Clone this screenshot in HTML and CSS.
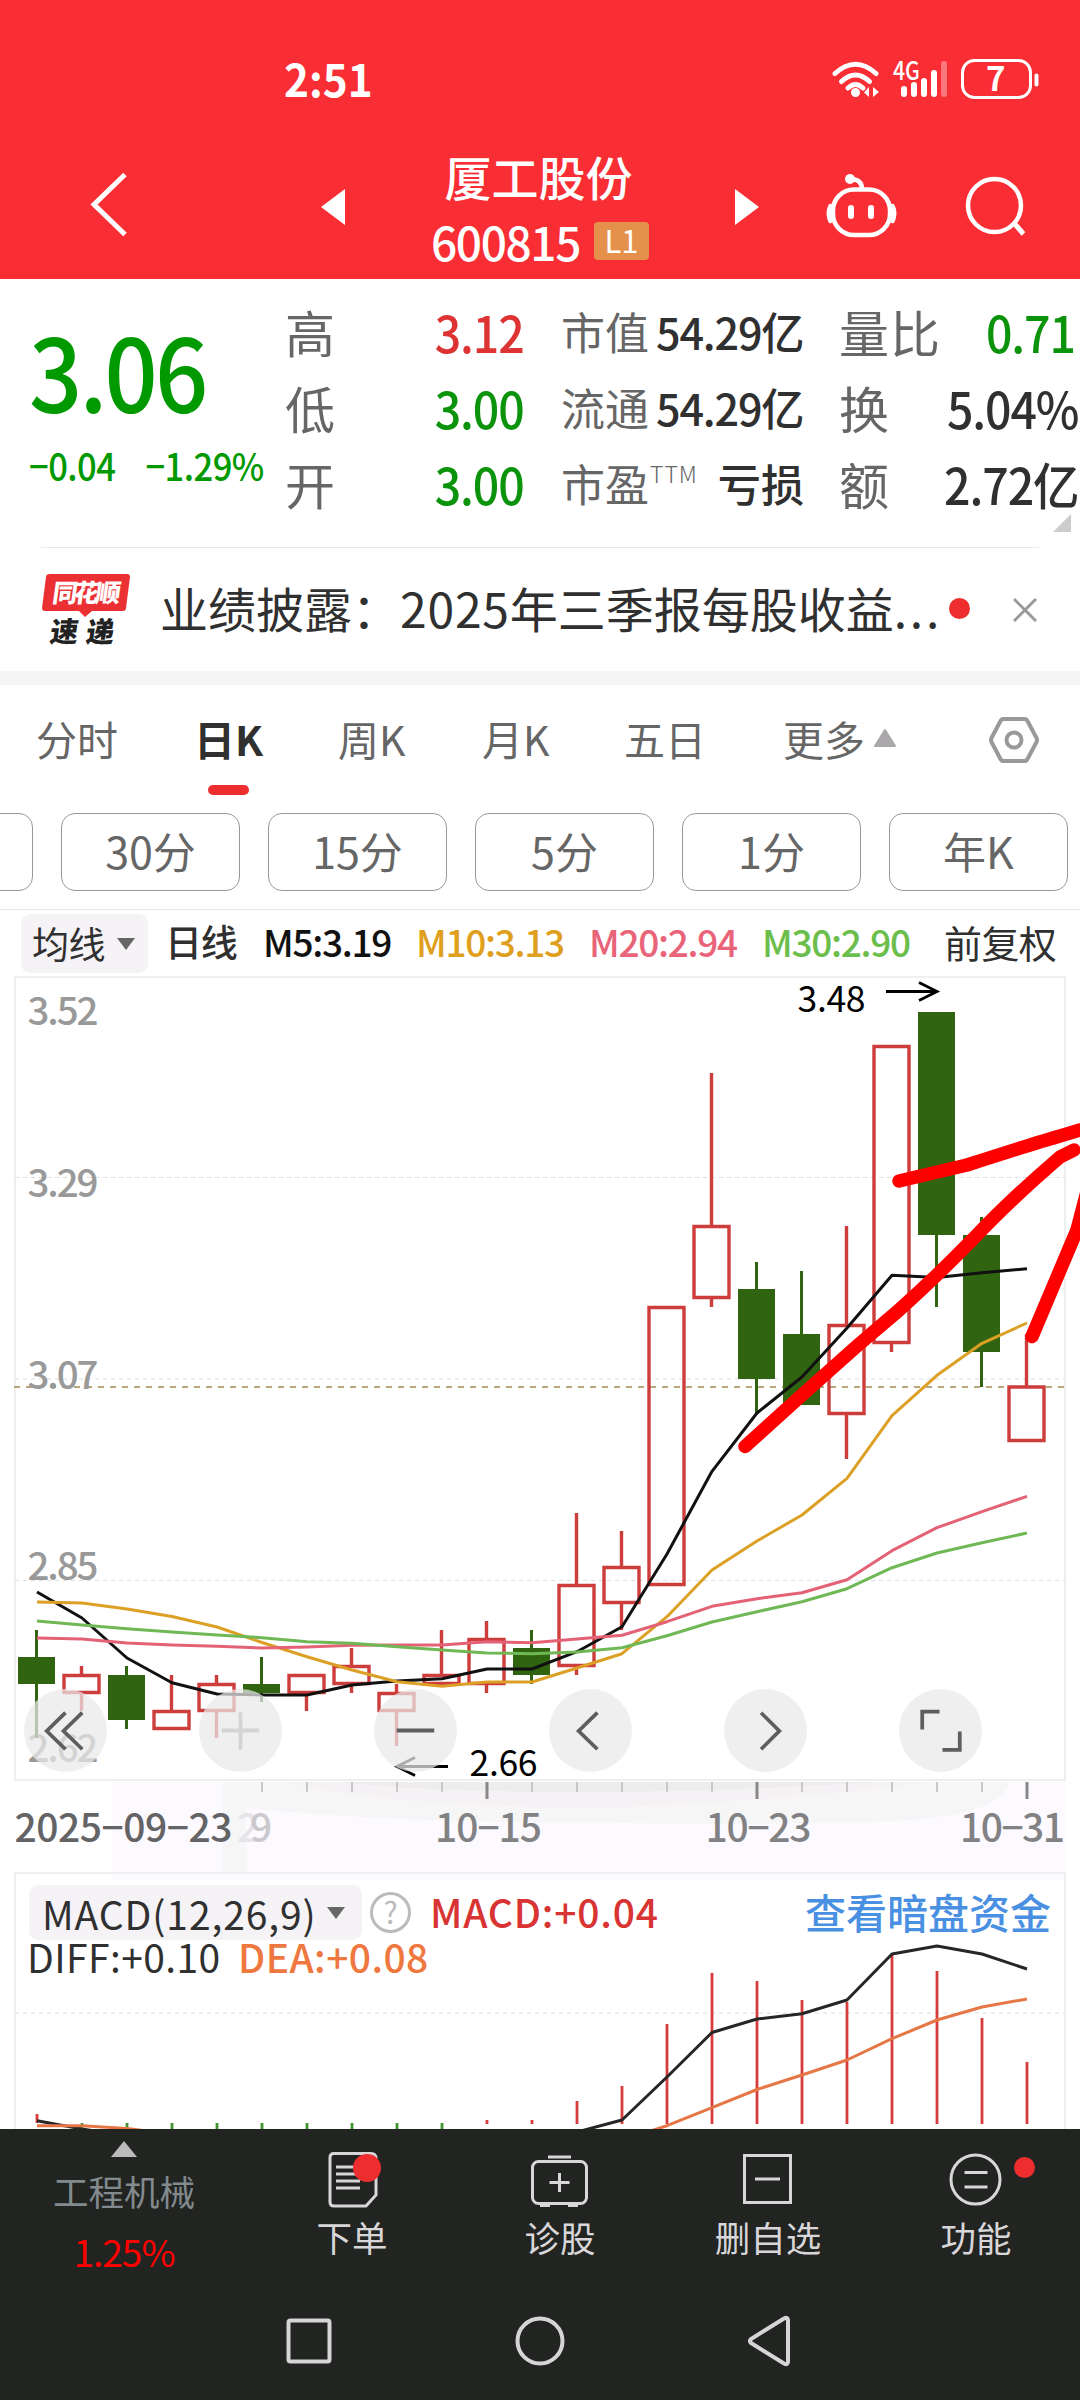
FILE: index.html
```html
<!DOCTYPE html>
<html lang="zh-CN">
<head>
<meta charset="utf-8">
<title>厦工股份 600815</title>
<link rel="stylesheet" href="styles.css">
</head>
<body>
<div class="app">
  <header class="top">
    <div class="status">
      <span class="clock">2:51</span>
      <svg class="status-icons" width="216" height="48" viewBox="828 56 216 48">
        <g fill="none" stroke="#fff" stroke-width="5" stroke-linecap="round">
          <path d="M835 73.500Q855.500 55 876 73.500"/>
          <path d="M841.500 81.500Q855.500 68.500 869.500 81.500"/>
          <path d="M848 88Q855.500 81 863 88"/>
        </g>
        <circle cx="855.500" cy="92.500" r="4.500" fill="#fff"/>
        <path d="M869 87v10l-5-4.500zM873 87v10l6-5z" fill="#fff"/>
        <text x="893" y="79.500" font-size="25" font-weight="500" textLength="27" lengthAdjust="spacingAndGlyphs" fill="#fff">4G</text>
        <g stroke="#fff" stroke-width="6" stroke-linecap="round">
          <path d="M904 89v5M914 85v9M924 81v13M934 73v21"/>
          <path d="M944 64v30" opacity=".35"/>
        </g>
        <rect x="962.500" y="60.500" width="68" height="37" rx="12" fill="none" stroke="#fff" stroke-width="3"/>
        <path d="M1036.500 75.500v9" stroke="#fff" stroke-width="4" stroke-linecap="round"/>
        <text x="986" y="91" font-size="33" font-weight="700" fill="#fff">7</text>
      </svg>
    </div>
    <div class="title-bar">
      <svg class="back" width="44" height="70" viewBox="88 170 44 70"><path d="M125 174.500 94 204.500l31 30" fill="none" stroke="#fff" stroke-width="5"/></svg>
      <svg class="prev" width="24" height="36" viewBox="0 0 24 36"><path d="M24 0v36L0 18z" fill="#fff"/></svg>
      <div class="stock">
        <div class="stock-name">厦工股份</div>
        <div class="stock-code"><span>600815</span><b>L1</b></div>
      </div>
      <svg class="next" width="24" height="36" viewBox="0 0 24 36"><path d="M0 0v36l24-18z" fill="#fff"/></svg>
      <svg class="robot" width="74" height="70" viewBox="824 170 74 70">
        <g fill="none" stroke="#fff" stroke-width="4.500" stroke-linecap="round">
          <rect x="833" y="189.500" width="57" height="45.500" rx="21"/>
          <path d="M830.500 206q-3.500 7 0 15M892.500 206q3.500 7 0 15M862 189q0-9-10-10"/>
          <path d="M851 208v8M871 208v8" stroke-width="6"/>
        </g>
        <circle cx="850" cy="179" r="5" fill="#fff"/>
      </svg>
      <svg class="search" width="64" height="64" viewBox="962 174 64 64"><g fill="none" stroke="#fff" stroke-width="4.500"><circle cx="994.500" cy="205.500" r="26.500"/><path d="M1014 223l9.500 11" stroke-width="5"/></g></svg>
    </div>
  </header>

  <section class="quote">
    <div class="price">
      <div class="last">3.06</div>
      <div class="change"><span>−0.04</span><span>−1.29%</span></div>
    </div>
    <dl class="col col-a">
      <dt>高</dt><dd class="up">3.12</dd>
      <dt>低</dt><dd class="down">3.00</dd>
      <dt>开</dt><dd class="down">3.00</dd>
    </dl>
    <dl class="col col-b">
      <dt>市值</dt><dd>54.29<i>亿</i></dd>
      <dt>流通</dt><dd>54.29<i>亿</i></dd>
      <dt>市盈<sup>TTM</sup></dt><dd><i>亏损</i></dd>
    </dl>
    <dl class="col col-c">
      <dt>量比</dt><dd class="down ratio">0.71</dd>
      <dt>换</dt><dd>5.04%</dd>
      <dt>额</dt><dd>2.72<i>亿</i></dd>
    </dl>
    <svg class="corner" width="18" height="18" viewBox="0 0 18 18"><path d="M18 0v18H0z" fill="#ccc"/></svg>
  </section>

  <section class="news">
    <svg class="logo" width="90" height="74" viewBox="41 572 90 74">
      <path d="M50 573h77q3 0 3 3l-4 31q0 3-3 3H92l-7 6-6-6H45q-3 0-3-3l4-31q0-3 4-3z" fill="#eb3033"/>
      <g font-weight="900" transform="skewX(-8)">
        <text x="136" y="601.500" font-size="25" textLength="68" fill="#fff">同花顺</text>
        <text x="139" y="641" font-size="28" textLength="64" fill="#222">速递</text>
      </g>
    </svg>
    <div class="headline">业绩披露：<span>2025</span>年三季报每股收益<em>...</em></div>
    <i class="dot"></i>
    <svg class="close" width="24" height="24" viewBox="0 0 24 24"><path d="M1 1l22 22M23 1 1 23" stroke="#999" stroke-width="3"/></svg>
  </section>

  <nav class="tabs">
    <span>分时</span><span class="active">日K</span><span>周K</span><span>月K</span><span>五日</span>
    <span class="more">更多<svg width="24" height="20" viewBox="0 0 24 20"><path d="M12 2 22 18H2z" fill="#aaa8aa" stroke="#aaa8aa" stroke-width="2" stroke-linejoin="round"/></svg></span>
    <svg class="gear" width="50" height="48" viewBox="0 0 50 48"><g fill="none" stroke="#999" stroke-width="4"><path d="M14.500 3h21q2 0 3 2l9 17q1 2 0 4l-9 17q-1 2-3 2h-21q-2 0-3-2l-9-17q-1-2 0-4l9-17q1-2 3-2z"/><circle cx="25" cy="24" r="7.500"/></g></svg>
  </nav>
  <div class="periods"><span></span><span>30分</span><span>15分</span><span>5分</span><span>1分</span><span>年K</span></div>

  <div class="ma">
    <span class="chip">均线<svg width="18" height="12" viewBox="0 0 18 12"><path d="M0 0h18L9 12z" fill="#666"/></svg></span>
    <span class="day">日线</span>
    <span class="m5">M5:3.19</span><span class="m10">M10:3.13</span><span class="m20">M20:2.94</span><span class="m30">M30:2.90</span>
    <span class="adjust">前复权</span>
  </div>

  <section class="kline">
    <svg width="1080" height="896" viewBox="0 976 1080 896">
      <path d="M112 1782H1065V1872H112z" fill="#fdfaff"/>
      <path d="M222 1782H1010Q1000 1822 850 1822Q700 1826 600 1822Q400 1824 246 1808V1872H222z" fill="#f6f6f6"/>
      <path d="M290 1782H925Q800 1800 600 1808Q380 1806 290 1782z" fill="#f5f1f5"/>
      <path d="M340 1782H880Q700 1793 560 1792Q400 1790 340 1782z" fill="#ededed"/>
      <rect x="15" y="977" width="1050" height="803" fill="#fff" stroke="#eee" stroke-width="2"/>
      <g stroke="#ddd" stroke-dasharray="4 4"><path d="M15 1177.500H1065M15 1580.500H1065"/><path d="M15 1379H1065" stroke="#eee" stroke-width="2"/></g>
      <path d="M14 1387H1065" stroke="#baa67c" stroke-width="2" stroke-dasharray="6 6"/>
      <g font-size="38.500" font-weight="500" fill="#999">
        <text x="27.500" y="1024.500" textLength="71">3.52</text><text x="27.500" y="1196.500" textLength="71">3.29</text><text x="27.500" y="1388.500" textLength="71">3.07</text><text x="27.500" y="1580" textLength="71">2.85</text><text x="27.500" y="1762" textLength="71">2.62</text>
      </g>
      <g fill="#306410">
        <path d="M18 1657h37v27H18zM108 1675h37v45h-37zM243 1684h37v9h-37zM513 1648h37v27h-37zM738 1289h37v90h-37zM783 1334h37v71h-37zM918 1012h37v223h-37zM963 1235h37v117h-37z"/>
        <path d="M36.500 1630V1738M126.500 1666V1729M261.500 1657V1702M531.500 1630V1684M756.500 1262V1414M801.500 1271V1334M936.500 1235V1307M981.500 1217V1387" stroke="#306410" stroke-width="3"/>
      </g>
      <g fill="none" stroke="#cd3d3c" stroke-width="3.400">
        <path d="M64 1675.500h35v17H64zM154 1711.500h35v17h-35zM199 1684.500h35v26h-35zM289 1675.500h35v17h-35zM334 1666.500h35v17h-35zM379 1693.500h35v17h-35zM424 1675.500h35v8h-35zM469 1639.500h35v44h-35zM559 1585.500h35v80h-35zM604 1567.500h35v35h-35zM649 1307.500h35v277h-35zM694 1226.500h35v71h-35zM829 1325.500h35v88h-35zM874 1046.500h35v296h-35zM1009 1387h35v53.500h-35z"/>
        <path d="M81.500 1666v9M81.500 1693v18M171.500 1675v36M216.500 1675v9M216.500 1712v26M306.500 1694v17M351.500 1648v18M351.500 1685v8M396.500 1684v9M396.500 1712v34M441.500 1630v45M486.500 1621v18M486.500 1685v8M576.500 1513v72M576.500 1667v8M621.500 1531v36M621.500 1603v27M711.500 1073v153M711.500 1298v9M846.500 1226v99M846.500 1414v45M891.500 1343v9M1026.500 1334v53"/>
      </g>
      <g fill="none" stroke-width="3" stroke-linejoin="round">
        <polyline stroke="#111" points="37,1592 82,1618 127,1658 172,1682.700 217,1694 262,1695 307,1695 352,1685 397,1681 442,1678.700 487,1669 532,1669 577,1651.700 622,1626.700 667,1554 712,1471.300 757,1413 802,1377 847,1328 892,1275.300 937,1277.500 982,1272.700 1027,1268.700"/>
        <polyline stroke="#dba025" points="37,1602 82,1603 127,1609 172,1616.500 217,1627 262,1642.500 307,1656.700 352,1670 397,1681.700 442,1686.300 487,1682 532,1682 577,1668 622,1653.700 667,1616.700 712,1570 757,1541 802,1515 847,1478.300 892,1415.700 937,1375.300 982,1343.300 1027,1323"/>
        <polyline stroke="#e46276" points="37,1638 82,1639 127,1643 172,1645 217,1646.300 262,1648 307,1647 352,1645.300 397,1645 442,1645 487,1641.700 532,1642.700 577,1639 622,1635.300 667,1621.700 712,1606.300 757,1598.700 802,1592.700 847,1579.700 892,1550.700 937,1527.700 982,1511.700 1027,1496.300"/>
        <polyline stroke="#6fb855" points="37,1621 82,1625 127,1628.700 172,1632 217,1635 262,1637.700 307,1641.700 352,1643.300 397,1646.700 442,1650 487,1653 532,1653.700 577,1652 622,1647.700 667,1635.700 712,1622 757,1611.700 802,1601.700 847,1588.700 892,1567.700 937,1553 982,1542.700 1027,1533"/>
      </g>
      <g font-size="35.500">
        <text x="797.500" y="1012" textLength="68">3.48</text><text x="469.500" y="1776" textLength="68">2.66</text>
      </g>
      <path d="M886 991.500H936M919 982.500l18 9-18 9M448 1766.500H398M415 1757.500l-18 9 18 9" fill="none" stroke="#000" stroke-width="2.800"/>
      <g stroke="#c8c8c8" stroke-width="2"><path d="M262 1782v10M307 1782v10M352 1782v10M397 1782v10M442 1782v10M532 1782v10M577 1782v10M622 1782v10M667 1782v10M712 1782v10M802 1782v10M847 1782v10M892 1782v10M937 1782v10M982 1782v10"/><path d="M487 1782v17M757 1782v17M1027 1782v17" stroke="#888" stroke-width="3"/></g>
      <g font-size="39" font-weight="500" fill="#828284">
        <text x="14.500" y="1841.500" textLength="218" fill="#646466">2025−09−23</text>
        <text x="237" y="1841.500" fill="#e6e4e8">2</text><text x="250" y="1841.500" fill="#ccc9ce">9</text>
        <text x="435" y="1841.500" textLength="107">10−15</text><text x="705.500" y="1841.500" textLength="106">10−23</text><text x="960" y="1841.500" textLength="105">10−31</text>
      </g>
      <g fill="none" stroke="#f00" stroke-width="13.500" stroke-linecap="round" stroke-linejoin="round">
        <path d="M899 1181 967 1165Q1035 1143 1060 1136L1080 1130"/>
        <path d="M745 1446.500 802 1395 857 1346 898 1311Q935 1278 975 1237Q1010 1200 1060 1157L1074 1150"/>
        <path d="M1032 1336.500 1077 1230 1090 1180"/>
      </g>
    </svg>
    <div class="controls">
      <svg viewBox="0 0 84 84"><path d="M42 24 23 42.500 42 61M59 24 40 42.500 59 61"/></svg>
      <svg class="off" viewBox="0 0 84 84"><path d="M23 42h38M42 23.500v38"/></svg>
      <svg viewBox="0 0 84 84"><path d="M23 42h38"/></svg>
      <svg viewBox="0 0 84 84"><path d="M49 24 30 42.500 49 61"/></svg>
      <svg viewBox="0 0 84 84"><path d="M37.500 24 56 42.500 37.500 61"/></svg>
      <svg viewBox="0 0 84 84"><path d="M23.500 41V23H41M61.500 43v18.500H44"/></svg>
    </div>
  </section>

  <section class="macd">
    <svg class="macd-plot" width="1080" height="257" viewBox="0 1872 1080 257">
      <path d="M112 1872H1065V1880H112z" fill="#fdfaff"/>
      <path d="M15 2129V1873H1065V2129" fill="none" stroke="#eee" stroke-width="2"/>
      <path d="M15 2013H1065" stroke="#eee" stroke-width="2" stroke-dasharray="4 4"/>
      <path d="M37 2114v9M487 2120v4M532 2120v4M577 2101v23M622 2086v38M667 2024v100M712 1973v151M757 1981v143M802 2000v124M847 2002v122M892 1954v170M937 1971v153M982 2018v106M1027 2062v62" stroke="#d73c3c" stroke-width="2.800"/>
      <path d="M82 2123v6M127 2123v6M172 2123v6M217 2123v6M262 2123v6M307 2123v6M352 2123v6M397 2123v6M442 2123v6" stroke="#3f9430" stroke-width="2.800"/>
      <g fill="none" stroke-width="3" stroke-linejoin="round">
        <path stroke="#262626" d="M37 2120.700 82 2129 127 2136M577 2132 622 2120 667 2077 712 2032.500 757 2019 802 2013.700 847 2000 892 1954 937 1946 982 1954 1027 1969"/>
        <path stroke="#e57646" d="M37 2125.700H82L127 2128.500 172 2134M622 2140 667 2125.700 712 2107.700 757 2089.500 802 2075 847 2060 892 2038.700 937 2020 982 2007 1027 1999"/>
      </g>
    </svg>
    <div class="macd-head">
      <span class="chip">MACD(12,26,9)<svg width="18" height="12" viewBox="0 0 18 12"><path d="M0 0h18L9 12z" fill="#666"/></svg></span>
      <span class="help">?</span>
      <span class="macd-val">MACD:+0.04</span>
      <a class="link">查看暗盘资金</a>
    </div>
    <div class="macd-sub"><span class="diff">DIFF:+0.10</span><span class="dea">DEA:+0.08</span></div>
  </section>

  <footer class="bottom">
    <div class="actions">
      <div class="sector"><svg width="26" height="16" viewBox="0 0 26 16"><path d="M13 0 26 16H0z" fill="#bbb"/></svg><span>工程机械</span><b>1.25%</b></div>
      <div class="act"><svg viewBox="316 2146 72 66"><path d="M334 2153.500h37q5 0 5 5V2195l-10 11H334q-4 0-4-4V2157.500q0-4 4-4z"/><path d="M336 2167h22M336 2174h22M336 2181h24M336 2188h24" stroke-width="2.800"/><circle class="badge" cx="367" cy="2168" r="14"/></svg><span>下单</span></div>
      <div class="act"><svg viewBox="524 2146 72 66"><rect x="532.500" y="2161.500" width="54" height="42" rx="6"/><path d="M548 2157h23M559.500 2173v19M549.500 2182.500h20"/><path d="M540 2205h10M568 2205h10" stroke-width="4"/></svg><span>诊股</span></div>
      <div class="act"><svg viewBox="732 2146 72 66"><rect x="744.500" y="2155.500" width="46" height="47"/><path d="M755 2179h25"/></svg><span>删自选</span></div>
      <div class="act"><svg viewBox="940 2146 96 66" class="wide"><circle cx="975.500" cy="2179.500" r="24.500"/><path d="M964.500 2172.500h23M964.500 2187h23"/><circle class="badge" cx="1024.500" cy="2167.500" r="10.500"/></svg><span>功能</span></div>
    </div>
    <svg class="sysnav" width="1080" height="64" viewBox="0 2309 1080 64"><g fill="none" stroke="#d6d4d6" stroke-width="4"><rect x="288.500" y="2320.500" width="41" height="41" rx="2"/><circle cx="540" cy="2341" r="22.500"/><path d="M784 2318.500 751 2339q-2 2 0 4l33 20.500q4 2 4-2V2320.500q0-4-4-2z"/></g></svg>
  </footer>
</div>
</body>
</html>
```
FILE: styles.css
```css
* { box-sizing: border-box; margin: 0; padding: 0; }
body { width: 1080px; background: #fff; font-family: "Noto Sans CJK SC", "Noto Sans", sans-serif; color: #303030; }
i, em { font-style: normal; }
svg { display: block; flex: none; }
.app { width: 1080px; height: 2400px; overflow: hidden; display: flex; flex-direction: column; }

.top { height: 279px; background: #f92e34; color: #fff; }
.status { height: 150px; padding: 49px 36px 0 284px; display: flex; justify-content: space-between; align-items: flex-start; }
.clock { font-size: 45px; line-height: 58px; font-weight: 700; transform: scaleX(.94); transform-origin: left; }
.status-icons { margin-top: 7px; }
.title-bar { height: 129px; display: flex; align-items: flex-start; }
.back { margin: 20px 0 0 88px; }
.prev { margin: 39px 0 0 189px; }
.stock { width: 390px; display: flex; flex-direction: column; align-items: center; }
.stock-name { font-size: 47px; line-height: 62px; font-weight: 500; margin-top: -5px; margin-left: -3px; }
.stock-code { display: flex; align-items: center; gap: 14px; margin-top: 3px; font-size: 46px; line-height: 62px; font-weight: 500; letter-spacing: -1.400px; }
.stock-code b { width: 55px; height: 38px; border-radius: 4px; background: #e5914c; font-size: 31px; line-height: 36px; font-weight: 400; text-align: center; letter-spacing: 0; }
.next { margin-top: 39px; }
.robot { margin: 20px 0 0 65px; }
.search { margin: 24px 0 0 64px; }

.quote { height: 268px; flex: none; position: relative; display: flex; padding-top: 14px; }
.price { width: 285px; padding-left: 29px; color: #009a00; }
.last { font-size: 101px; line-height: 152px; font-weight: 500; letter-spacing: -3px; transform: scaleX(.925); transform-origin: left; }
.change { display: flex; gap: 33px; font-size: 38px; line-height: 40px; font-weight: 500; letter-spacing: -.6px; white-space: nowrap; transform: scaleX(.91); transform-origin: left; }
.col { display: grid; grid-template-rows: repeat(3, 76px); font-size: 50px; line-height: 76px; white-space: nowrap; }
.col dt { color: #666; }
.col dd { font-weight: 500; justify-self: end; letter-spacing: -1.2px; transform: scaleX(.93); transform-origin: right; }
.col-a { width: 239px; grid-template-columns: 50px 1fr; }
.col-b { width: 243px; margin-left: 37px; grid-template-columns: 90px 1fr; font-size: 44px; }
.col-b dd { transform: scaleX(.98); }
.col-b dd i { letter-spacing: 0; }
.col-b sup { font-size: 23px; font-weight: 300; line-height: 1; position: relative; top: -3px; left: 1px; letter-spacing: 1px; }
.col-c { width: 239px; margin-left: 35px; grid-template-columns: 90px 149px; }
.col-c dt { letter-spacing: 1px; }
.col-c .ratio { padding-right: 3px; }
.col .up { color: #dd3333; }
.col .down { color: #0c930c; }
.corner { position: absolute; right: 9px; bottom: 15px; }

.news { height: 124px; flex: none; margin: 0 41px; border-top: 1px solid #e8e8e8; display: flex; align-items: center; }
.logo { margin-top: 0; }
.headline { width: 780px; margin-left: 29px; font-size: 48px; line-height: 70px; white-space: nowrap; margin-top: -6px; }
.headline span { letter-spacing: .8px; }
.headline em { letter-spacing: 2.700px; }
.dot { width: 21px; height: 21px; border-radius: 50%; background: #ee2e2e; margin-left: 9px; margin-top: -2px; }
.close { margin-left: 43px; }

.tabs { height: 128px; flex: none; border-top: 14px solid #f5f5f5; display: flex; align-items: flex-start; padding-left: 36px; font-size: 41px; line-height: 60px; color: #666; }
.tabs > span { width: 144px; padding-top: 23px; white-space: nowrap; }
.tabs > span:first-child { width: 158px; }
.tabs .active { color: #303030; font-weight: 700; position: relative; }
.tabs .active::after { content: ""; position: absolute; left: 14px; top: 100px; width: 41px; height: 10px; border-radius: 5px; background: #ee2e2e; }
.tabs > span:nth-child(5) { width: 159px; margin-left: -2px; }
.tabs > .more { width: 206px; display: flex; align-items: center; gap: 8px; }
.gear { margin-top: 31px; }
.periods { height: 111px; flex: none; border-bottom: 1px solid #e6e6e6; display: flex; gap: 28px; padding-top: 14px; margin-left: -146px; width: 1226px; }
.periods span { width: 179px; height: 78px; flex: none; border: 1px solid #999; border-radius: 14px; text-align: center; font-size: 43px; line-height: 73px; color: #666; }

.ma { height: 66px; flex: none; display: flex; padding: 4px 0 0 21px; font-size: 37px; line-height: 55px; font-weight: 500; white-space: nowrap; letter-spacing: -1.300px; }
.chip { display: flex; align-items: center; background: #f6f3f7; border-radius: 9px; }
.ma .chip { width: 127px; height: 59px; padding-left: 11px; gap: 12px; font-weight: 400; letter-spacing: -.5px; }
.day { width: 98px; margin-left: 17px; }
.m5 { width: 153px; color: #111; }
.m10 { width: 173px; color: #dfa020; }
.m20 { width: 173px; color: #e96478; }
.m30 { width: 182px; color: #6cbe4c; }
.adjust { font-weight: 400; font-size: 38px; letter-spacing: -.6px; }

.kline { height: 896px; position: relative; flex: none; }
.controls { position: absolute; left: 24px; top: 713px; width: 958px; display: flex; justify-content: space-between; }
.controls svg { width: 83px; height: 83px; border-radius: 50%; background: rgba(233, 233, 233, .73); fill: none; stroke: #5e5e5e; stroke-width: 3.800px; }
.controls .off { stroke: #d4d4d4; }

.macd { height: 257px; position: relative; flex: none; }
.macd-plot { position: absolute; left: 0; top: 0; }
.macd-head, .macd-sub { position: relative; display: flex; font-size: 39px; line-height: 52px; font-weight: 400; white-space: nowrap; }
.macd-head { padding: 13px 0 0 29px; height: 67px; }
.macd .chip { width: 333px; height: 55px; padding-left: 13px; justify-content: space-between; padding-right: 17px; letter-spacing: .9px; }
.help { width: 41px; height: 41px; margin: 7px 0 0 8px; border: 3px solid #bbb; border-radius: 50%; color: #bbb; font-size: 30px; line-height: 33px; text-align: center; }
.macd-val { width: 375px; margin-left: 19px; color: #d93434; font-weight: 500; letter-spacing: .8px; }
.link { color: #4a90e2; font-size: 41px; font-weight: 500; }
.macd-sub { padding-left: 27px; line-height: 44px; margin-top: -5px; letter-spacing: .4px; }
.diff { width: 211px; }
.dea { color: #ef7840; font-weight: 500; }

.bottom { height: 271px; flex: none; background: #212421; color: #d8d6d8; }
.actions { display: grid; grid-template-columns: 248px repeat(4, 208px); height: 180px; font-size: 35.500px; line-height: 50px; }
.sector, .act { display: flex; flex-direction: column; align-items: center; }
.sector { padding-top: 12px; color: #828a8e; }
.sector span { margin-top: 9px; }
.sector b { margin-top: 10px; font-size: 37px; font-weight: 400; color: #f00; letter-spacing: -1px; }
.act { padding-top: 17px; }
.act svg { width: 72px; height: 66px; fill: none; stroke: #d8d6d8; stroke-width: 3px; }
.act .wide { width: 96px; margin-left: 24px; }
.act .badge { fill: #ee2e2e; stroke: none; }
```
